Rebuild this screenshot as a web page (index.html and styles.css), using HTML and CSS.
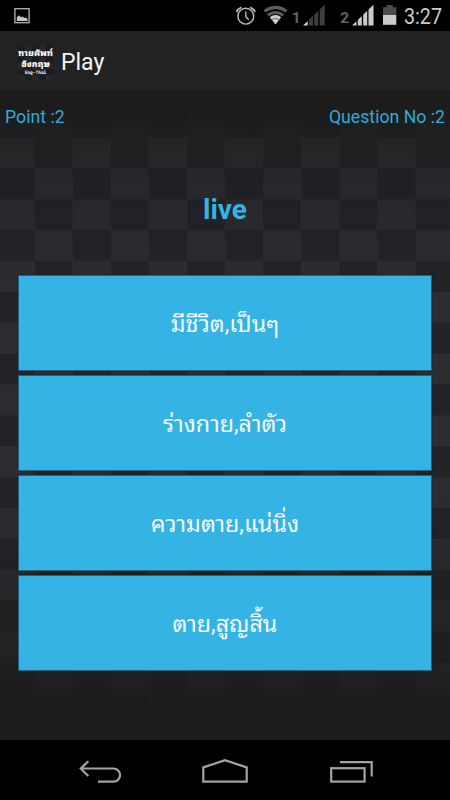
FILE: index.html
```html
<!DOCTYPE html>
<html lang="th">

<head>
    <meta charset="UTF-8">
    <meta name="viewport" content="width=device-width, initial-scale=1.0">
    <title>Play</title>
    <link rel="stylesheet" href="styles.css">
</head>

<body>
    <div class="status-bar">
        <svg width="450" height="31" viewBox="0 0 450 31">
            <!-- picture notification -->
            <rect x="14.9" y="8.7" width="14.2" height="14" fill="none" stroke="#b5b5b5" stroke-width="1.3" />
            <path d="M16.8 21V17.5L19 15.3L21 17.3L22.5 16.5L24.5 18L26 17.5L27.5 19V21Z" fill="#c4c4c4" />
            <!-- alarm -->
            <g fill="none" stroke="#bdbdbd" stroke-width="1.4">
                <circle cx="245.8" cy="16.2" r="7.9" />
                <path d="M245.8 11.5V16.5L248.6 19.8" />
                <path d="M236.5 12Q238 8.5 241.5 7.2M255.1 12Q253.6 8.5 250.1 7.2" stroke-width="1.7" />
            </g>
            <!-- wifi -->
            <g fill="none" stroke="#5c5c5c" stroke-width="3">
                <path d="M264.5 11.3Q275.5 3.5 286.5 11.3" />
                <path d="M267.8 15.2Q275.5 9.7 283.2 15.2" />
            </g>
            <path d="M269.8 17.2Q275.5 12.8 281.2 17.2L275.5 24.5Z" fill="#cfcfcf" />
            <path d="M271.6 19.6Q275.5 17.2 279.4 19.6" fill="none" stroke="#555" stroke-width=".8" />
            <!-- sim 1 -->
            <text class="sim" x="291.8" y="22.8">1</text>
            <path d="M303 25.5L307.7 21V25.5Z" fill="#cfcfcf" />
            <path d="M309 25.5V19.7L313 15.8V25.5ZM314.3 25.5V14.5L318.2 10.9V25.5ZM319.7 25.5V9.5L324.7 4.8V25.5Z" fill="#3f3f3f" />
            <!-- sim 2 -->
            <text class="sim" x="340.3" y="22.8">2</text>
            <path d="M352 25.5L356.5 21.2V25.5ZM357.8 25.5V20L361.8 16.1V25.5ZM363.2 25.5V14.8L367.2 10.8V25.5ZM368.5 25.5V9.5L373.5 4.8V25.5Z" fill="#cbcbcb" />
            <!-- battery -->
            <path d="M383 15V7.2H386.5V5H392.8V7.2H396.3V15Z" fill="#4b4b4b" />
            <rect x="383" y="15" width="13.3" height="9.8" fill="#cbcbcb" />
            <text class="clock" x="404" y="24" textLength="38" lengthAdjust="spacingAndGlyphs">3:27</text>
        </svg>
    </div>

    <div class="action-bar">
        <div class="logo">
            <span>ทายศัพท์</span>
            <span>อังกฤษ</span>
            <small>Eng-Thai</small>
        </div>
        <h1 class="title">Play</h1>
    </div>

    <div class="game">
        <div class="score">
            <span>Point :2</span>
            <span>Question No :2</span>
        </div>
        <h2 class="word">live</h2>
        <div class="answers">
            <button class="answer">มีชีวิต,เป็นๆ</button>
            <button class="answer">ร่างกาย,ลำตัว</button>
            <button class="answer">ความตาย,แน่นิ่ง</button>
            <button class="answer">ตาย,สูญสิ้น</button>
        </div>
    </div>

    <div class="nav-bar">
        <svg width="450" height="60" viewBox="0 0 450 60" fill="none" stroke="#a3a3a3" stroke-width="2.2">
            <!-- back -->
            <path d="M81 28.5H113.5A6.6 6.6 0 0 1 113.5 41.7H98" />
            <path d="M88.3 21.2L80.8 28.6L88.3 36" />
            <!-- home -->
            <path d="M203.3 41.6V27.4L225 20.2L246.7 27.4V41.6Z" />
            <!-- recent apps -->
            <rect x="331.2" y="28.2" width="33.4" height="13.4" />
            <path d="M340 22.2H371.7V36.5" />
        </svg>
    </div>
</body>

</html>
```

FILE: styles.css
```css
body {
    margin: 0;
    width: 450px;
    height: 800px;
    display: flex;
    flex-direction: column;
    overflow: hidden;
    background: #000;
    font-family: Roboto, "Noto Sans Thai Looped", "Droid Sans Thai", "Noto Sans Thai", "Noto Sans", sans-serif;
}

svg {
    display: block;
}

.status-bar {
    height: 31px;
}

.sim {
    font: bold 15.5px Roboto, sans-serif;
    fill: #626262;
}

.clock {
    font: 22.5px Roboto, sans-serif;
    fill: #cbcbcb;
}

.action-bar {
    height: 59px;
    display: flex;
    align-items: center;
    gap: 8px;
    padding-left: 18px;
    background: #222;
    color: #f3f3f3;
}

.logo {
    width: 35px;
    height: 35px;
    margin-top: 3px;
    display: flex;
    flex-direction: column;
    align-items: center;
    justify-content: center;
    border-radius: 3px;
    background: conic-gradient(#27262c 25%, #1c1b20 0 50%, #27262c 0 75%, #1c1b20 0) 0 0 / 14px 12px;
    font-size: 8.8px;
    font-weight: 900;
    line-height: 10.5px;
    white-space: nowrap;
}

.logo small {
    font: bold 4.5px/7px "DejaVu Sans Mono", monospace;
}

.title {
    margin: 4px 0 0;
    font-size: 23px;
    font-weight: normal;
}

.game {
    height: 650px;
    box-sizing: border-box;
    padding: 15px 18px 0;
    background:
        linear-gradient(#1c1c1d 16px, rgba(28, 28, 29, .75) 47px, rgba(28, 28, 29, .5) 48px, transparent 200px, transparent 400px, rgba(28, 28, 29, .75) 590px, #1c1c1d 617px),
        conic-gradient(#2d2c31 25%, #232227 0 50%, #2d2c31 0 75%, #232227 0) 34.7px 47.3px / 76.2px 61.8px;
}

.score {
    display: flex;
    justify-content: space-between;
    margin: 0 -13px;
    color: #33a9d8;
    font-size: 17.7px;
    line-height: 24px;
}

.word {
    margin: 63px 0 0;
    color: #35b3e5;
    font-size: 28px;
    line-height: 36px;
    text-align: center;
}

.answers {
    display: grid;
    gap: 4px;
    margin-top: 47px;
}

.answer {
    height: 96px;
    border: 1px solid #23627c;
    padding: 0 0 3px;
    background: #35b3e5;
    box-shadow: 0 0 1px #1b1414;
    color: #f4fbff;
    font-family: inherit;
    font-size: 23.3px;
}

.nav-bar {
    height: 60px;
}
```
